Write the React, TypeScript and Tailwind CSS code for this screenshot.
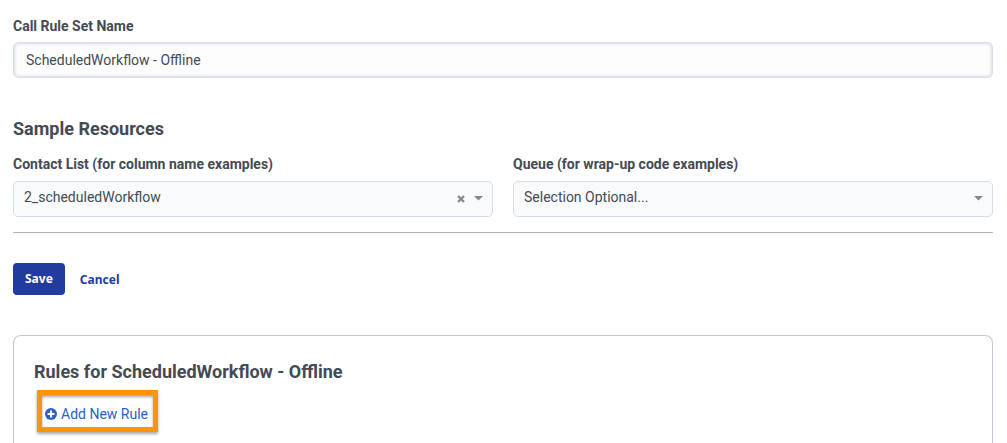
import { useState } from "react";

type ResourceSelectProps = {
  id: string;
  label: string;
  placeholder: string;
  options: string[];
  initial?: string;
};

function ResourceSelect({ id, label, placeholder, options, initial = "" }: ResourceSelectProps) {
  const [value, setValue] = useState(initial);
  return (
    <div className="flex-1">
      <label htmlFor={id} className="mb-[7px] block text-sm leading-5 font-bold">
        {label}
      </label>
      <div className="relative">
        <select
          id={id}
          value={value}
          onChange={(e) => setValue(e.target.value)}
          className="block h-9 w-full appearance-none rounded-[5px] border border-[#d6dde8] bg-[#f9fafc] pr-12 pb-1 pl-2.5 text-sm"
        >
          <option value="">{placeholder}</option>
          {options.map((option) => (
            <option key={option} value={option}>
              {option}
            </option>
          ))}
        </select>
        {value && (
          <button
            type="button"
            aria-label="Clear selection"
            onClick={() => setValue("")}
            className="absolute top-3.5 right-7 text-[#888888]"
          >
            <svg viewBox="0 0 8 8" className="block size-2" aria-hidden="true">
              <path d="M1 1 7 7M7 1 1 7" stroke="currentColor" strokeWidth="2.4" />
            </svg>
          </button>
        )}
        <svg
          viewBox="0 0 9 5"
          className="pointer-events-none absolute top-[15px] right-2.5 h-[5px] w-[9px] text-[#888888]"
          aria-hidden="true"
        >
          <path d="M0 0h9L4.5 4.6z" fill="currentColor" />
        </svg>
      </div>
    </div>
  );
}

export default function App() {
  const [name, setName] = useState("ScheduledWorkflow - Offline");
  return (
    <main className="flex min-h-screen flex-col bg-white pt-4 pr-3.5 pl-[13px] font-[Roboto,sans-serif] text-[#444a52]">
      <label htmlFor="rule-set-name" className="mb-1.5 block text-sm leading-5 font-bold">
        Call Rule Set Name
      </label>
      <input
        id="rule-set-name"
        type="text"
        value={name}
        onChange={(e) => setName(e.target.value)}
        className="h-9 w-full rounded-[5px] border border-[#d9dfe9] bg-[#fdfdfd] px-3 text-sm shadow-[inset_0_0_3px_1px_#d6dbe3] outline-none"
      />

      <h2 className="mt-[39px] mb-[13px] text-lg leading-6 font-bold">Sample Resources</h2>
      <div className="flex gap-5">
        <ResourceSelect
          id="contact-list"
          label="Contact List (for column name examples)"
          placeholder="Selection Optional..."
          options={["2_scheduledWorkflow"]}
          initial="2_scheduledWorkflow"
        />
        <ResourceSelect
          id="queue"
          label="Queue (for wrap-up code examples)"
          placeholder="Selection Optional..."
          options={[]}
        />
      </div>

      <hr className="mt-[15px] h-px border-0 bg-[#b5b5b5]" />

      <div className="mt-[30px] flex items-center gap-[15px] font-['Noto_Sans',sans-serif] text-xs font-bold">
        <button type="button" className="h-8 rounded-[4px] bg-[#233b9f] px-3 text-white">
          Save
        </button>
        <button type="button" className="pt-0.5 text-[#233b9f]">
          Cancel
        </button>
      </div>

      <section className="mt-10 flex-1 rounded-t-lg border border-b-0 border-[#c2c8d6] px-5 pt-6">
        <h2 className="text-lg leading-6 font-bold">Rules for ScheduledWorkflow - Offline</h2>
        <div className="mt-5 pl-[11px]">
          <button type="button" className="relative flex items-center gap-1 text-sm leading-5 text-[#2a60c8]">
            <svg viewBox="0 0 12 12" className="size-3" aria-hidden="true">
              <circle cx="6" cy="6" r="6" fill="currentColor" />
              <path d="M6 2.6v6.8M2.6 6h6.8" stroke="white" strokeWidth="2" />
            </svg>
            Add New Rule
            <span className="pointer-events-none absolute -top-3.5 -right-2.5 -bottom-2 -left-2 border-[5px] border-[#ff9408] shadow-[0_2px_3px_rgba(0,0,0,0.35),inset_0_2px_3px_rgba(0,0,0,0.35)]" />
          </button>
        </div>
      </section>
    </main>
  );
}
